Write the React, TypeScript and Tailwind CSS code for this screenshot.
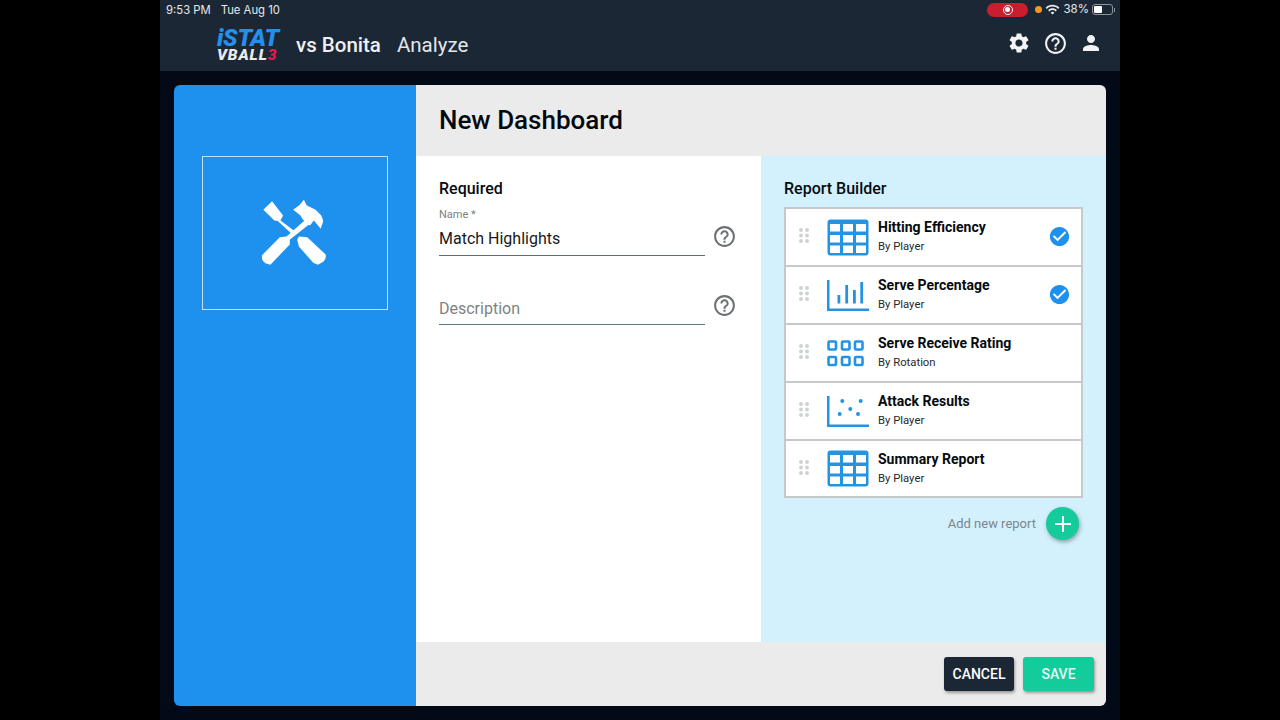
import { MdSettings, MdHelpOutline, MdPerson, MdCheckCircle, MdWifi } from 'react-icons/md'

const reports = [
  { title: 'Hitting Efficiency', sub: 'By Player', icon: 'table', checked: true },
  { title: 'Serve Percentage', sub: 'By Player', icon: 'bars', checked: true },
  { title: 'Serve Receive Rating', sub: 'By Rotation', icon: 'grid', checked: false },
  { title: 'Attack Results', sub: 'By Player', icon: 'scatter', checked: false },
  { title: 'Summary Report', sub: 'By Player', icon: 'table', checked: false },
]

function ReportIcon({ name }: { name: string }) {
  const blue = '#2493e2'
  if (name === 'table') {
    return (
      <svg width="42" height="37" viewBox="0 0 42 37">
        <rect x="0.5" y="0.5" width="41" height="36" rx="3" fill={blue} />
        {[5, 16, 26.5].map((y) =>
          [3, 16, 29].map((x) => <rect key={`${x}-${y}`} x={x} y={y} width="10" height="7.5" fill="#fff" />),
        )}
      </svg>
    )
  }
  if (name === 'bars') {
    return (
      <svg width="42" height="31" viewBox="0 0 42 31" fill={blue}>
        <rect x="0" y="0" width="2.5" height="31" />
        <rect x="0" y="28.5" width="42" height="2.5" />
        <rect x="10.5" y="15" width="2.8" height="8.5" />
        <rect x="18.3" y="5" width="2.8" height="18.5" />
        <rect x="26" y="10" width="2.8" height="13.5" />
        <rect x="33.3" y="2" width="2.8" height="21.5" />
      </svg>
    )
  }
  if (name === 'grid') {
    return (
      <svg width="37" height="27" viewBox="0 0 37 27" fill="none" stroke={blue} strokeWidth="2.6">
        {[1.5, 17].map((y) =>
          [1.5, 15, 28].map((x) => <rect key={`${x}-${y}`} x={x} y={y} width="7.5" height="8" rx="1" />),
        )}
      </svg>
    )
  }
  return (
    <svg width="42" height="31" viewBox="0 0 42 31" fill={blue}>
      <rect x="0" y="0" width="2.5" height="31" />
      <rect x="0" y="28.5" width="42" height="2.5" />
      <circle cx="15.3" cy="5" r="2" />
      <circle cx="33.7" cy="5" r="2" />
      <circle cx="23.3" cy="13" r="2" />
      <circle cx="12.7" cy="18" r="2" />
      <circle cx="31" cy="18" r="2" />
    </svg>
  )
}

function DragDots() {
  return (
    <svg width="10" height="15" viewBox="0 0 10 15" fill="#cfd2d4">
      {[2, 7.5, 13].map((y) =>
        [2, 8].map((x) => <circle key={`${x}-${y}`} cx={x} cy={y} r="2" />),
      )}
    </svg>
  )
}

function ToolsIcon() {
  return (
    <svg width="67" height="67" viewBox="185 149 200 200" fill="#fff">
      <path d="M189 178 L215 153 L248 195 L240 210 L280 240 L272 248 L232 212 L222 210 Z" />
      <path d="M278 178 L298 163 L310 148 L318 165 L345 178 L362 195 L368 212 L360 235 L340 210 L328 225 L318 218 L305 205 L300 195 Z" />
      <path d="M318 205 L328 220 L268 268 L268 282 L210 342 L195 338 Q183 330 184 315 L238 260 L258 258 Z" />
      <path d="M295 258 L320 260 L375 312 Q378 325 368 333 L352 342 L338 336 L295 288 L290 268 Z" />
    </svg>
  )
}

function HelpButton() {
  return <MdHelpOutline className="text-[25px] text-[#6c7175]" />
}

export default function App() {
  return (
    <div className="flex h-[720px] w-[1280px] justify-center overflow-hidden bg-black font-['Roboto',sans-serif]">
      <div className="flex w-[960px] flex-col bg-[#020a17]">
        <header className="relative flex h-[71px] shrink-0 bg-[#1c2735] text-white">
          <div className="absolute left-[6px] top-[3px] flex gap-[10px] font-['Inter',sans-serif] text-[11.3px] leading-[15px] text-[#e6e8ea]">
            <span>9:53 PM</span>
            <span>Tue Aug 10</span>
          </div>
          <div className="absolute right-[5px] top-[2px] flex h-[15px] items-center font-['Inter',sans-serif] text-[11.5px] text-[#e6e8ea]">
            <span className="mr-[7px] flex h-[14px] w-[41px] items-center justify-center rounded-full bg-[#c81e2e]">
              <span className="flex h-[10px] w-[10px] items-center justify-center rounded-full border border-white">
                <span className="h-[5px] w-[5px] rounded-full bg-white" />
              </span>
            </span>
            <span className="mr-[3px] h-[7px] w-[7px] rounded-full bg-[#f0991e]" />
            <MdWifi className="mr-[3px] text-[15px]" />
            <span className="mr-[3px]">38%</span>
            <span className="flex h-[11px] w-[21px] items-center rounded-[3px] border border-[#8c939b] p-[1px]">
              <span className="h-full w-[8px] rounded-[1px] bg-white" />
            </span>
            <span className="ml-[1px] h-[4px] w-[1px] bg-[#8c939b]" />
          </div>
          <div className="ml-[57px] mt-[29px] flex h-[32px] items-center">
            <div className="mt-[1px] flex w-[64px] flex-col items-start italic">
              <span className="text-[24px] font-black leading-[17px] tracking-[-0.3px] text-[#2490ea]">iSTAT</span>
              <span className="mt-[1px] text-[15.5px] font-black leading-[14px] tracking-[0.9px] text-[#e9ecef]">
                VBALL<span className="text-[#e0194f]">3</span>
              </span>
            </div>
            <span className="ml-[15px] text-[20.5px] font-medium text-[#eef0f2]">vs Bonita</span>
            <span className="ml-[16px] text-[20.5px] text-[#e3e6e9]">Analyze</span>
          </div>
          <div className="ml-auto mr-[17px] mt-[29px] flex h-[28px] items-center gap-[12px] text-[#f2f3f4]">
            <MdSettings className="text-[24px]" />
            <MdHelpOutline className="text-[25px]" />
            <MdPerson className="-ml-[1px] text-[24px]" />
          </div>
        </header>

        <main className="mx-[14px] mt-[14px] flex h-[621px] overflow-hidden rounded-[6px]">
          <aside className="w-[242px] shrink-0 bg-[#1e90ee] px-[28px] pt-[71px]">
            <div className="flex h-[154px] w-[186px] items-center justify-center border border-[#c3e0f8]">
              <ToolsIcon />
            </div>
          </aside>

          <div className="flex flex-1 flex-col">
            <div className="flex h-[71px] shrink-0 items-center bg-[#ebebeb] px-[23px]">
              <h1 className="text-[26px] font-medium text-[#04090f]">New Dashboard</h1>
            </div>

            <div className="flex flex-1">
              <section className="w-[345px] bg-white pl-[23px] pt-[23px]">
                <h2 className="text-[16px] font-medium leading-[20px] text-[#060b10]">Required</h2>
                <div className="mt-[9px] flex items-center">
                  <div className="w-[266px] border-b border-[#5d6b75] pb-[6px]">
                    <div className="text-[11px] leading-[13px] text-[#7c8084]">Name *</div>
                    <div className="mt-[8px] text-[16px] leading-[20px] text-[#171a1d]">Match Highlights</div>
                  </div>
                  <div className="ml-[7px] mt-[8px]">
                    <HelpButton />
                  </div>
                </div>
                <div className="mt-[37px] flex items-center">
                  <div className="w-[266px] border-b border-[#5d7888] pb-[5px] text-[16px] leading-[20px] text-[#7d8286]">
                    Description
                  </div>
                  <div className="mb-[12px] ml-[7px]">
                    <HelpButton />
                  </div>
                </div>
              </section>

              <section className="flex-1 bg-[#d3f1fd] px-[23px] pt-[23px]">
                <h2 className="text-[16px] font-medium leading-[20px] text-[#060b10]">Report Builder</h2>
                <ul className="mt-[8px] border-2 border-[#c5c9cb] bg-white">
                  {reports.map((r, i) => (
                    <li
                      key={r.title}
                      className={`flex items-center pl-[13px] pr-[10px] ${i === 0 ? 'h-[56px]' : i === 4 ? 'h-[57px] border-t-2 border-[#c5c9cb]' : 'h-[58px] border-t-2 border-[#c5c9cb]'}`}
                    >
                      <div className="mb-[3px]">
                        <DragDots />
                      </div>
                      <div className="ml-[18px] flex w-[42px] justify-start">
                        <ReportIcon name={r.icon} />
                      </div>
                      <div className="ml-[9px] flex-1 pb-[2px]">
                        <div className="text-[14px] font-bold leading-[18px] text-[#060b10]">{r.title}</div>
                        <div className="mt-[4px] text-[11.3px] leading-[14px] text-[#25292d]">{r.sub}</div>
                      </div>
                      {r.checked && <MdCheckCircle className="mb-[2px] text-[23px] text-[#1e90ee]" />}
                    </li>
                  ))}
                </ul>
                <div className="mt-[9px] flex items-center justify-end pr-[4px]">
                  <span className="text-[13px] text-[#7b868c]">Add new report</span>
                  <button className="ml-[10px] flex h-[33px] w-[33px] items-center justify-center rounded-full bg-[#14cc9b] shadow-[1px_2px_4px_rgba(0,0,0,0.35)]">
                    <svg width="18" height="18" viewBox="0 0 18 18" stroke="#fff" strokeWidth="2">
                      <path d="M9 1v16M1 9h16" />
                    </svg>
                  </button>
                </div>
              </section>
            </div>

            <div className="flex h-[64px] shrink-0 items-center justify-end gap-[9px] bg-[#ebebeb] pr-[12px]">
              <button className="h-[34px] w-[70px] rounded-[3px] bg-[#1c2735] text-[14px] font-medium text-white shadow-[1px_2px_3px_rgba(0,0,0,0.35)]">
                CANCEL
              </button>
              <button className="h-[34px] w-[71px] rounded-[3px] bg-[#14cc9b] text-[14px] font-medium text-[#e4fbf4] shadow-[1px_2px_3px_rgba(0,0,0,0.35)]">
                SAVE
              </button>
            </div>
          </div>
        </main>
      </div>
    </div>
  )
}
